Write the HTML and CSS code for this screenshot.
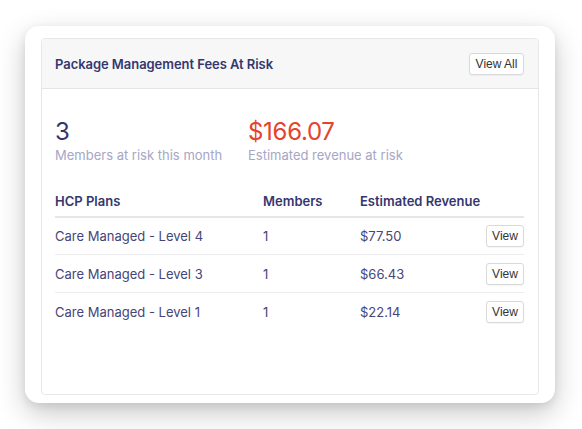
FILE: index.html
```html
<!DOCTYPE html>
<html>
<head>
<meta charset="utf-8">
<link rel="stylesheet" href="styles.css">
</head>
<body>
<div class="card">
  <div class="panel">
    <div class="panel-header">
      <h2 class="title">Package Management Fees At Risk</h2>
      <button class="btn btn-all">View All</button>
    </div>
    <div class="panel-body">
      <div class="stats">
        <div class="stat stat-members">
          <div class="stat-value">3</div>
          <div class="stat-label">Members at risk this month</div>
        </div>
        <div class="stat">
          <div class="stat-value stat-red">$166.07</div>
          <div class="stat-label">Estimated revenue at risk</div>
        </div>
      </div>
      <div class="table">
        <div class="row head">
          <div>HCP Plans</div>
          <div>Members</div>
          <div>Estimated Revenue</div>
          <div></div>
        </div>
        <div class="row">
          <div>Care Managed - Level 4</div>
          <div>1</div>
          <div>$77.50</div>
          <div><button class="btn btn-view">View</button></div>
        </div>
        <div class="row">
          <div>Care Managed - Level 3</div>
          <div>1</div>
          <div>$66.43</div>
          <div><button class="btn btn-view">View</button></div>
        </div>
        <div class="row last">
          <div>Care Managed - Level 1</div>
          <div>1</div>
          <div>$22.14</div>
          <div><button class="btn btn-view">View</button></div>
        </div>
      </div>
    </div>
  </div>
</div>
</body>
</html>
```
FILE: styles.css
```css
html, body {
  margin: 0;
  padding: 0;
  background: #ffffff;
}
body {
  font-family: Inter, "Noto Sans", sans-serif;
  color: #3b3b72;
  padding-top: 26px;
  padding-left: 25px;
  height: 429px;
  box-sizing: border-box;
  overflow: hidden;
}
.card {
  width: 530px;
  height: 377px;
  box-sizing: border-box;
  background: #fff;
  border-radius: 14px;
  padding: 12px 16px 8px 16px;
  box-shadow: 0 10px 28px rgba(0, 0, 0, 0.22), 0 3px 8px rgba(0, 0, 0, 0.08);
}
.panel {
  height: 100%;
  box-sizing: border-box;
  border: 1px solid #e8e8eb;
  border-radius: 4px;
  overflow: hidden;
}
.panel-header {
  height: 50px;
  box-sizing: border-box;
  background: #f7f7f8;
  border-bottom: 1px solid #e4e4e7;
  display: flex;
  align-items: center;
  justify-content: space-between;
  padding: 0 14px 0 13px;
}
.title {
  margin: 0;
  font-size: 13px;
  font-weight: 600;
  color: #36366e;
  letter-spacing: -0.05px;
}
.btn {
  font-family: "Liberation Sans", Arial, sans-serif;
  font-size: 12px;
  color: #333;
  background: #fff;
  border: 1px solid #d9d9dc;
  border-radius: 3px;
  padding: 0;
  box-shadow: 0 1px 1px rgba(0,0,0,0.04);
}
.btn-all {
  width: 55px;
  height: 22px;
}
.btn-view {
  width: 38px;
  height: 22px;
}
.panel-body {
  padding: 29px 14px 0 13px;
}
.stats {
  display: flex;
}
.stat-members {
  width: 193px;
}
.stat-value {
  font-size: 24px;
  line-height: 28px;
  font-weight: 400;
  color: #36366e;
  letter-spacing: -0.3px;
}
.stat-red {
  color: #e5432c;
}
.stat-label {
  font-size: 13px;
  line-height: 18px;
  color: #a6a6c6;
}
.table {
  margin-top: 29px;
}
.row {
  display: grid;
  grid-template-columns: 208px 97px 1fr auto;
  align-items: center;
  height: 37px;
  font-size: 13px;
  color: #45457a;
  border-bottom: 1px solid #ececee;
}
.row.head {
  height: 23px;
  align-items: start;
  font-weight: 600;
  color: #36366e;
  border-bottom: 2px solid #e6e6e9;
}
.row:nth-child(2) {
  height: 36px;
}
.row.last {
  border-bottom: none;
}
```
